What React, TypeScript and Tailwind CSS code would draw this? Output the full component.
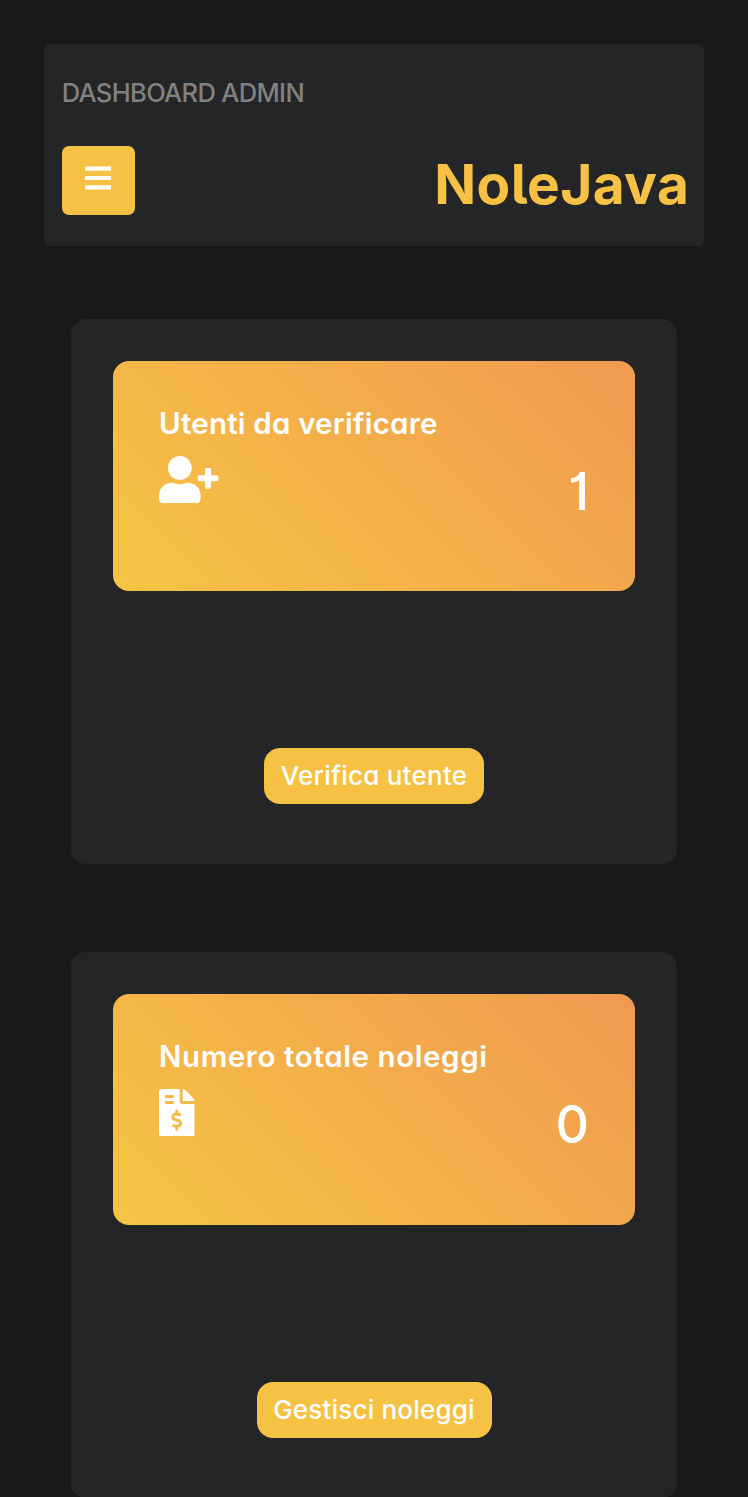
import type { ReactNode } from "react";
import { FaBars, FaFileInvoiceDollar, FaUserPlus } from "react-icons/fa";

type StatCardProps = {
  title: string;
  titleClass: string;
  value: string;
  valueClass: string;
  icon: ReactNode;
  action: string;
  actionClass: string;
  buttonClass: string;
};

function StatCard({ title, titleClass, value, valueClass, icon, action, actionClass, buttonClass }: StatCardProps) {
  return (
    <section className="flex h-[545.4px] w-[606px] shrink-0 flex-col items-center rounded-[15px] bg-[#242526] pt-[41.5px]">
      <div className="h-[230.75px] w-[522px] shrink-0 rounded-[16px] bg-[linear-gradient(45deg,#f7c443_0%,#f09a50_100%)] px-[46px] pt-[43px]">
        <h2 className="h-[52px] whitespace-nowrap text-[29.5px] leading-[38px] font-semibold">
          <span className={titleClass}>{title}</span>
        </h2>
        <div className="flex justify-between">
          {icon}
          <span className={valueClass}>{value}</span>
        </div>
      </div>
      <button className={buttonClass}>
        <span className={actionClass}>{action}</span>
      </button>
    </section>
  );
}

export default function App() {
  return (
    <main className="flex h-[1497px] w-[748px] flex-col items-center overflow-hidden bg-[#18191a] pt-[43.5px] font-['Inter','Open_Sans',sans-serif] text-white [font-feature-settings:'cv11','cv01']">
      <header className="h-[202px] w-[660.5px] shrink-0 rounded-[6px] bg-[#242526] px-[18px] pt-[30px]">
        <p className="h-[72px] whitespace-nowrap text-[25.5px] leading-[38px] tracking-[-0.65px] text-[#818181] font-[450]">
          DASHBOARD ADMIN
        </p>
        <div className="flex items-start justify-between">
          <button aria-label="Menu" className="flex h-[69px] w-[73px] justify-center rounded-[7px] bg-[#f7c244] pt-[17px]">
            <FaBars className="h-[30px] w-[26.25px]" />
          </button>
          <div className="-mr-[3px] mt-[5px] text-[55px] leading-[66px] font-bold tracking-[0.4px] text-[#f7c244] [font-feature-settings:'cv05']">
            NoleJava
          </div>
        </div>
      </header>
      <div className="mt-[73.5px] flex flex-col gap-[88px]">
        <StatCard
          title="Utenti da verificare"
          titleClass="tracking-[0.2px]"
          value="1"
          valueClass="mt-[2px] text-[52px] leading-[68px] font-[450]"
          icon={<FaUserPlus className="h-[47.5px] w-[59.5px]" />}
          action="Verifica utente"
          actionClass="tracking-[0.25px]"
          buttonClass="mt-[157px] h-[56px] w-[220px] whitespace-nowrap rounded-[16px] bg-[#f7c244] text-[26px] leading-[54px] font-[450]"
        />
        <StatCard
          title="Numero totale noleggi"
          titleClass="tracking-[0.6px]"
          value="0"
          valueClass="mt-[2px] text-[52px] leading-[68px] font-[450]"
          icon={<FaFileInvoiceDollar className="h-[47.5px] w-[35.5px]" />}
          action="Gestisci noleggi"
          actionClass="tracking-[0.2px]"
          buttonClass="mt-[157px] h-[56px] w-[235px] whitespace-nowrap rounded-[16px] bg-[#f7c244] text-[26px] leading-[54px] font-[450]"
        />
      </div>
    </main>
  );
}
